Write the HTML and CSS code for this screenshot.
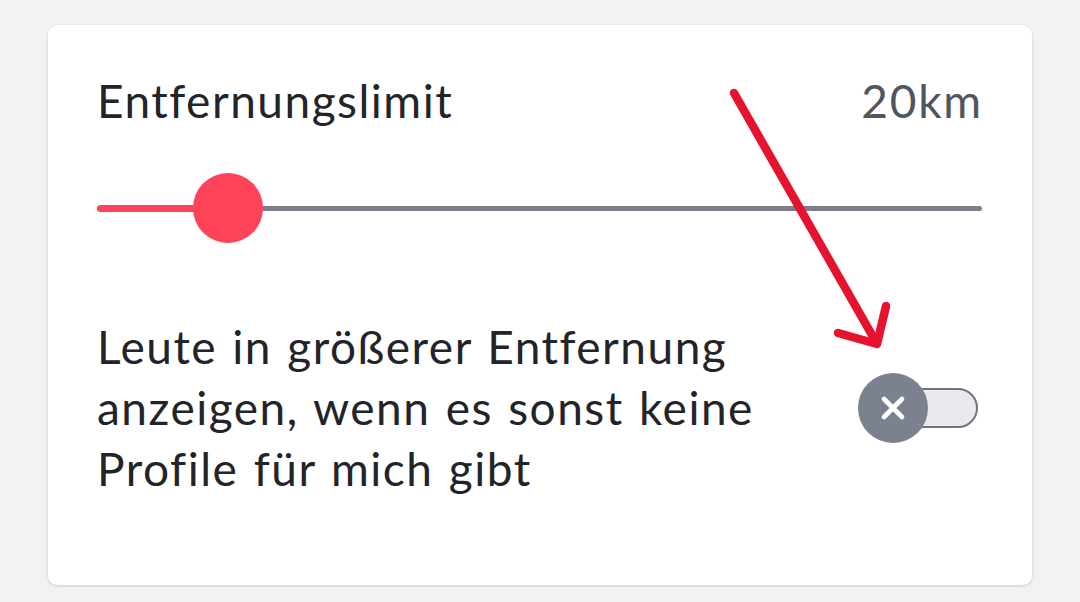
FILE: index.html
```html
<!DOCTYPE html>
<html lang="de">
<head>
<meta charset="utf-8">
<title>Entfernungslimit</title>
<link rel="stylesheet" href="styles.css">
</head>
<body>
<main class="card">
  <div class="row head">
    <span class="label">Entfernungslimit</span>
    <span class="value">20km</span>
  </div>
  <div class="slider">
    <div class="track"></div>
    <div class="fill"></div>
    <div class="thumb"></div>
  </div>
  <div class="row option">
    <p class="option-text">Leute in größerer Entfernung anzeigen, wenn es sonst keine Profile für mich gibt</p>
    <div class="switch">
      <div class="switch-track"></div>
      <div class="switch-knob">
        <svg viewBox="0 0 28 28" width="28" height="28"><path d="M5 5 L23 23 M23 5 L5 23" stroke="#fff" stroke-width="4.6" stroke-linecap="round" fill="none"/></svg>
      </div>
    </div>
  </div>
  <svg class="pointer" viewBox="0 0 1080 602" width="1080" height="602">
    <g stroke="#e5132d" stroke-width="8.5" stroke-linecap="round" stroke-linejoin="round" fill="none">
      <path d="M734 93 L876 342"/>
      <path d="M838 333 L877 344 L886 306"/>
    </g>
  </svg>
</main>
</body>
</html>
```

FILE: styles.css
```css
html, body {
  margin: 0;
  padding: 0;
}

body {
  background: #f2f2f2;
  font-family: Lato, "Open Sans", sans-serif;
  width: 1080px;
  height: 602px;
  overflow: hidden;
}

.card {
  box-sizing: border-box;
  margin: 25px 48px 0;
  width: 984px;
  height: 560px;
  background: #fff;
  border-radius: 9px;
  box-shadow: 0 1px 3px rgba(0, 0, 0, 0.18);
  padding: 0 50px 0 49px;
  display: flex;
  flex-direction: column;
}

.row {
  display: flex;
  justify-content: space-between;
}

.head {
  align-items: baseline;
  margin-top: 51px;
  height: 50px;
  line-height: 50px;
}

.label {
  font-size: 46px;
  letter-spacing: 1.5px;
  color: #222428;
}

.value {
  font-size: 46px;
  letter-spacing: 1.8px;
  margin-right: -1px;
  color: #505560;
}

.slider {
  position: relative;
  margin-top: 47px;
  height: 70px;
}

.track {
  position: absolute;
  left: 0;
  right: 0;
  top: 33px;
  height: 5px;
  border-radius: 3px;
  background: #7b7f89;
}

.fill {
  position: absolute;
  left: 0;
  width: 140px;
  top: 32px;
  height: 7px;
  border-radius: 4px;
  background: #fe4257;
}

.thumb {
  position: absolute;
  left: 96px;
  top: 0;
  width: 70px;
  height: 70px;
  border-radius: 50%;
  background: #fe4257;
}

.option {
  align-items: center;
  margin-top: 73px;
}

.option-text {
  margin: 0;
  width: 720px;
  font-size: 46px;
  letter-spacing: 1.5px;
  word-spacing: 2px;
  line-height: 61px;
  color: #222428;
}

.switch {
  position: relative;
  width: 120px;
  height: 70px;
  margin-right: 4px;
  margin-top: 0;
}

.switch-track {
  position: absolute;
  right: 0;
  top: 15px;
  width: 84px;
  height: 40px;
  box-sizing: border-box;
  border: 2px solid #6f7480;
  border-radius: 20px;
  background: #e9eaee;
}

.switch-knob {
  position: absolute;
  left: 0;
  top: 0;
  width: 70px;
  height: 70px;
  border-radius: 50%;
  background: #7b818e;
  display: flex;
  align-items: center;
  justify-content: center;
}

.pointer {
  position: absolute;
  left: 0;
  top: 0;
  pointer-events: none;
}
```
